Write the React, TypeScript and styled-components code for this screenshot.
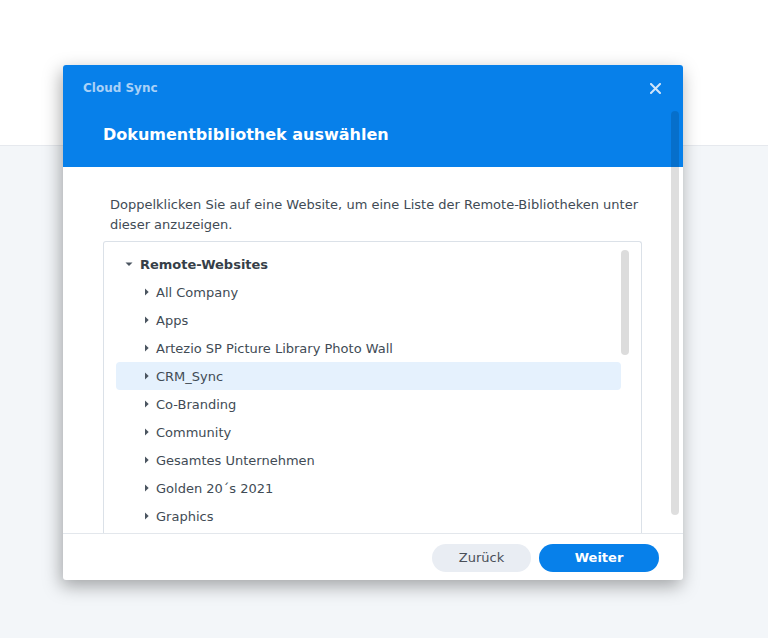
import React from "react";
import styled, { createGlobalStyle } from "styled-components";

const GlobalStyle = createGlobalStyle`
  html, body {
    margin: 0;
    padding: 0;
    background: #f3f6f9;
  }
  body {
    font-family: "DejaVu Sans", Verdana, sans-serif;
    color: #414b55;
  }
`;

const sites = [
  "All Company",
  "Apps",
  "Artezio SP Picture Library Photo Wall",
  "CRM_Sync",
  "Co-Branding",
  "Community",
  "Gesamtes Unternehmen",
  "Golden 20´s 2021",
  "Graphics",
];

export default function App() {
  return (
    <>
      <GlobalStyle />
      <Page>
        <TopBand />
        <Backdrop />
        <Dialog>
          <Header>
            <AppName>Cloud Sync</AppName>
            <CloseButton aria-label="close">
              <svg width="11" height="11" viewBox="0 0 11 11">
                <path
                  d="M1 1 L10 10 M10 1 L1 10"
                  stroke="#cfe4fa"
                  strokeWidth="2"
                  strokeLinecap="square"
                />
              </svg>
            </CloseButton>
            <Title>Dokumentbibliothek auswählen</Title>
          </Header>
          <Body>
            <Description>
              Doppelklicken Sie auf eine Website, um eine Liste der
              Remote-Bibliotheken unter dieser anzuzeigen.
            </Description>
            <TreeBox>
              <Row $level={0}>
                <Caret $open />
                <RootLabel>Remote-Websites</RootLabel>
              </Row>
              {sites.map((name) => (
                <Row key={name} $level={1} $selected={name === "CRM_Sync"}>
                  <Caret />
                  <ItemLabel>{name}</ItemLabel>
                </Row>
              ))}
              <InnerThumb />
            </TreeBox>
          </Body>
          <Footer>
            <Button>Zurück</Button>
            <Button $primary>Weiter</Button>
          </Footer>
          <OuterThumb />
        </Dialog>
      </Page>
    </>
  );
}

function Caret({ $open }: { $open?: boolean }) {
  return $open ? (
    <CaretBox $w={8}>
      <svg width="8" height="8" viewBox="0 0 8 8">
        <path d="M0.5 2.5 L7.5 2.5 L4 6 Z" fill="#4b5560" />
      </svg>
    </CaretBox>
  ) : (
    <CaretBox $w={4}>
      <svg width="4" height="8" viewBox="0 0 4 8">
        <path d="M0 0.5 L3.7 4 L0 7.5 Z" fill="#4b5560" />
      </svg>
    </CaretBox>
  );
}

const Page = styled.div`
  position: relative;
  width: 768px;
  height: 638px;
  overflow: hidden;
  display: flex;
  flex-direction: column;
`;

const TopBand = styled.div`
  height: 145px;
  background: #ffffff;
  border-bottom: 1px solid #e6e9ee;
`;

const Backdrop = styled.div`
  flex: 1;
  background: #f3f6f9;
`;

const Dialog = styled.div`
  position: absolute;
  left: 63px;
  top: 65px;
  width: 620px;
  height: 515px;
  background: #ffffff;
  border-radius: 3px;
  box-shadow: -2px 6px 18px rgba(0, 0, 0, 0.34);
  display: flex;
  flex-direction: column;
  overflow: hidden;
`;

const Header = styled.div`
  position: relative;
  height: 102px;
  flex-shrink: 0;
  background: #0780ea;
  box-sizing: border-box;
  padding: 16px 20px 0 20px;
  display: flex;
  flex-direction: column;
`;

const AppName = styled.div`
  font-size: 12px;
  font-weight: bold;
  line-height: 15px;
  color: #a9d1f7;
`;

const CloseButton = styled.div`
  position: absolute;
  right: 22px;
  top: 18px;
  width: 11px;
  height: 11px;
  display: flex;
`;

const Title = styled.div`
  margin-top: 29px;
  padding-left: 20px;
  font-size: 16px;
  font-weight: bold;
  line-height: 20px;
  color: #ffffff;
`;

const Body = styled.div`
  flex: 1;
  min-height: 0;
  display: flex;
  flex-direction: column;
  padding: 28px 41px 0 40px;
  overflow: hidden;
`;

const Description = styled.div`
  padding-left: 7px;
  margin-right: -4px;
  font-size: 13px;
  line-height: 20px;
  color: #414b55;
`;

const TreeBox = styled.div`
  position: relative;
  margin-top: 6px;
  flex: 1;
  border: 1px solid #dbe1e8;
  border-bottom: none;
  border-radius: 3px 3px 0 0;
  padding: 8px 20px 0 12px;
  overflow: hidden;
`;

const Row = styled.div<{ $level: number; $selected?: boolean }>`
  height: 28px;
  display: flex;
  align-items: center;
  padding-left: ${(p) => 9 + p.$level * 20}px;
  border-radius: 4px;
  background: ${(p) => (p.$selected ? "#e5f1fd" : "transparent")};
`;

const CaretBox = styled.span<{ $w: number }>`
  width: ${(p) => p.$w}px;
  height: 8px;
  display: flex;
  margin-right: 7px;
`;

const RootLabel = styled.span`
  font-size: 13px;
  font-weight: bold;
  color: #363f48;
`;

const ItemLabel = styled.span`
  font-size: 13px;
  color: #414b55;
`;

const InnerThumb = styled.div`
  position: absolute;
  top: 8px;
  right: 12px;
  width: 8px;
  height: 105px;
  border-radius: 4px;
  background: #dcdcdc;
`;

const Footer = styled.div`
  height: 47px;
  flex-shrink: 0;
  border-top: 1px solid #e3e7ec;
  box-sizing: border-box;
  display: flex;
  align-items: center;
  justify-content: flex-end;
  gap: 8px;
  padding: 1px 24px 0 0;
`;

const Button = styled.div<{ $primary?: boolean }>`
  height: 28px;
  width: ${(p) => (p.$primary ? 120 : 99)}px;
  border-radius: 14px;
  display: flex;
  align-items: center;
  justify-content: center;
  font-size: 13px;
  font-weight: ${(p) => (p.$primary ? "bold" : "normal")};
  color: ${(p) => (p.$primary ? "#ffffff" : "#4a5059")};
  background: ${(p) => (p.$primary ? "#0780ea" : "#e9edf3")};
`;

const OuterThumb = styled.div`
  position: absolute;
  left: 608px;
  top: 46px;
  width: 8px;
  height: 404px;
  border-radius: 4px;
  background: rgba(0, 0, 0, 0.13);
`;
